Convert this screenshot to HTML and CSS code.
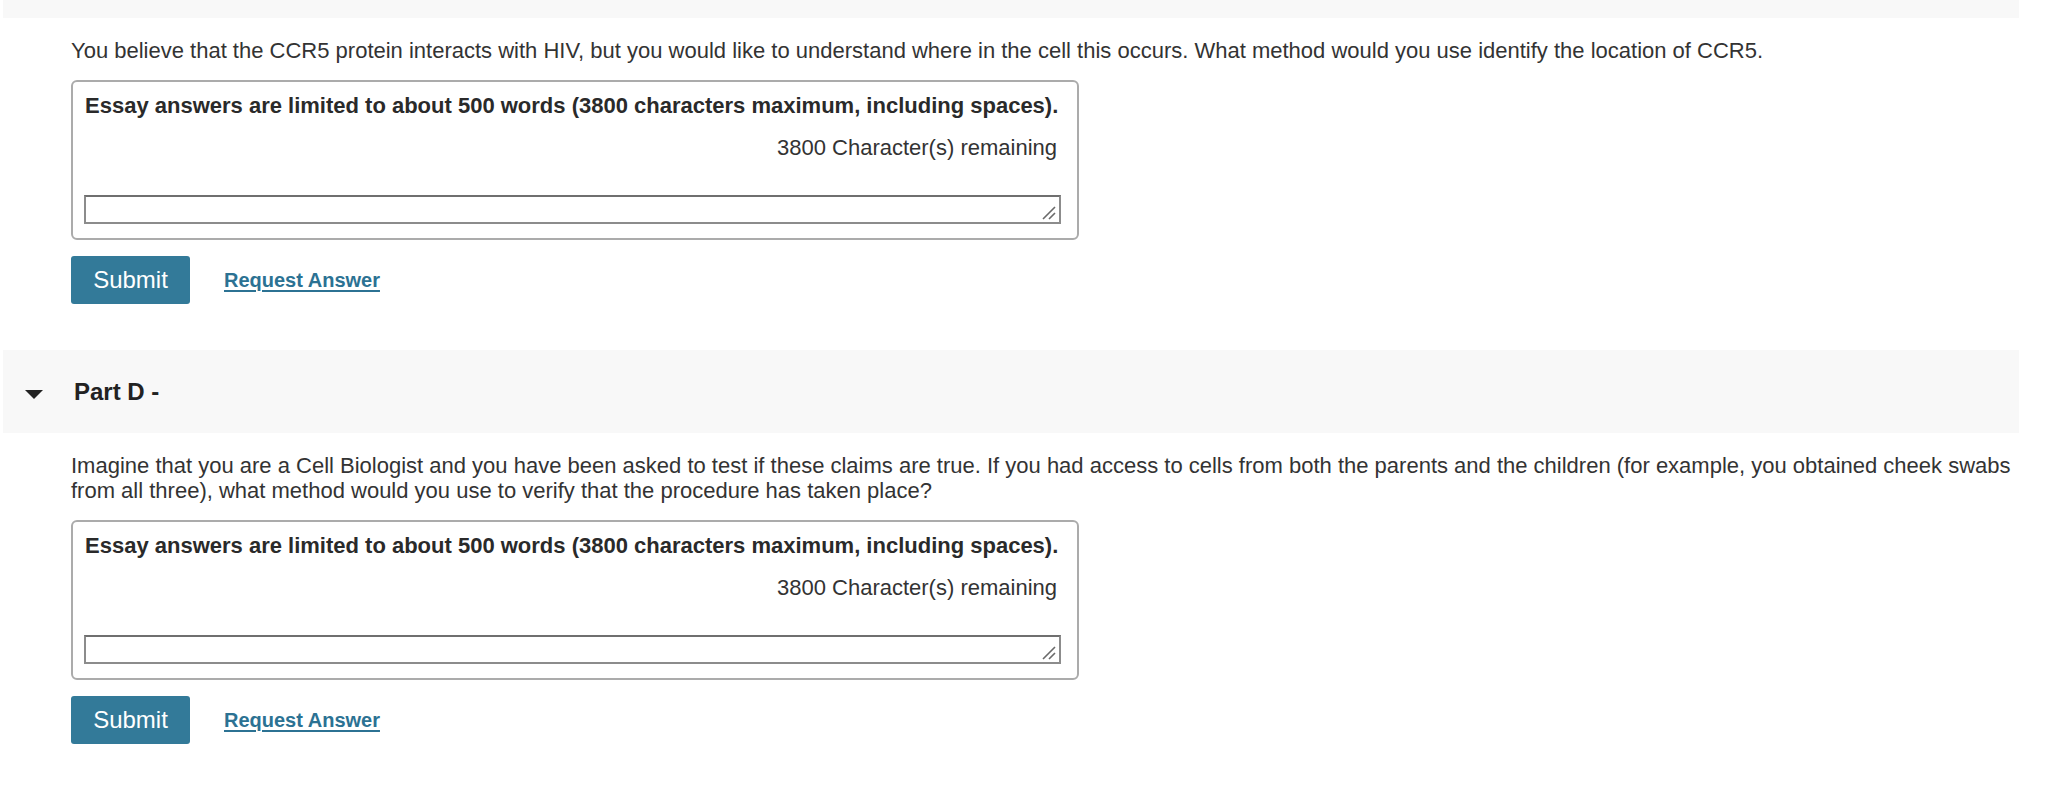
FILE: index.html
```html
<!DOCTYPE html>
<html lang="en">
<head>
<meta charset="utf-8">
<title>Parts</title>
<link rel="stylesheet" href="styles.css">
</head>
<body>
<div class="page">
  <div class="band band-top"></div>
  <section class="part-body">
    <p class="question">You believe that the CCR5 protein interacts with HIV, but you would like to understand where in the cell this occurs. What method would you use identify the location of CCR5.</p>
    <div class="essay">
      <div class="essay-note">Essay answers are limited to about 500 words (3800 characters maximum, including spaces).</div>
      <div class="remaining">3800 Character(s) remaining</div>
      <div class="answer-wrap">
        <textarea class="answer" rows="1"></textarea>
        <svg class="grip" width="14" height="14" viewBox="0 0 14 14" aria-hidden="true"><path d="M1 13 L13 1 M7 13 L13 7" stroke="#6a6a6a" stroke-width="1.6" fill="none"/></svg>
      </div>
    </div>
    <div class="actions">
      <button class="submit" type="button">Submit</button>
      <a class="request" href="#">Request Answer</a>
    </div>
  </section>

  <div class="band part-header">
    <span class="caret"></span>
    <h3 class="part-title">Part D -</h3>
  </div>
  <section class="part-body">
    <p class="question">Imagine that you are a Cell Biologist and you have been asked to test if these claims are true. If you had access to cells from both the parents and the children (for example, you obtained cheek swabs from all three), what method would you use to verify that the procedure has taken place?</p>
    <div class="essay">
      <div class="essay-note">Essay answers are limited to about 500 words (3800 characters maximum, including spaces).</div>
      <div class="remaining">3800 Character(s) remaining</div>
      <div class="answer-wrap">
        <textarea class="answer" rows="1"></textarea>
        <svg class="grip" width="14" height="14" viewBox="0 0 14 14" aria-hidden="true"><path d="M1 13 L13 1 M7 13 L13 7" stroke="#6a6a6a" stroke-width="1.6" fill="none"/></svg>
      </div>
    </div>
    <div class="actions">
      <button class="submit" type="button">Submit</button>
      <a class="request" href="#">Request Answer</a>
    </div>
  </section>
</div>
</body>
</html>
```

FILE: styles.css
```css
html, body {
  margin: 0;
  padding: 0;
  background: #ffffff;
}

body {
  font-family: "Liberation Sans", Arial, Helvetica, sans-serif;
  font-size: 22px;
  line-height: 25px;
  color: #333333;
}

.page {
  margin-left: 3px;
  width: 2016px;
}

.band {
  background: #f8f8f8;
}

.band-top {
  height: 18px;
}

.part-body {
  padding: 20px 0 46px 68px;
}

.question {
  margin: 0 0 17px 0;
}

.essay {
  width: 1008px;
  box-sizing: border-box;
  border: 2px solid #ababab;
  border-radius: 6px;
  padding: 11px 16px 14px 11px;
}

.essay-note {
  font-weight: bold;
  color: #2a2a2a;
  padding-left: 1px;
}

.remaining {
  text-align: right;
  margin-top: 17px;
  padding-right: 4px;
}

.answer-wrap {
  position: relative;
  width: 977px;
  margin-top: 35px;
}

.answer {
  display: block;
  box-sizing: border-box;
  width: 977px;
  height: 29px;
  margin: 0;
  padding: 2px 4px;
  border: 2px solid #8c8c8c;
  border-top-color: #6f6f6f;
  border-radius: 0;
  font: inherit;
  resize: none;
  background: #ffffff;
}

.grip {
  position: absolute;
  right: 5px;
  bottom: 4px;
  pointer-events: none;
}

.actions {
  display: flex;
  align-items: center;
  gap: 34px;
  margin-top: 16px;
}

.submit {
  width: 119px;
  height: 48px;
  border: none;
  border-radius: 3px;
  background: #337a99;
  color: #ffffff;
  font-family: "Liberation Sans", Arial, Helvetica, sans-serif;
  font-size: 24px;
  padding: 0;
  cursor: pointer;
}

.request {
  color: #2c7293;
  font-weight: bold;
  font-size: 20px;
  text-decoration: underline;
  text-underline-offset: 3px;
}

.part-header {
  height: 83px;
  display: flex;
  align-items: center;
  padding-left: 22px;
}

.caret {
  width: 0;
  height: 0;
  border-left: 9px solid transparent;
  border-right: 9px solid transparent;
  border-top: 9px solid #222222;
  margin-top: 6px;
  margin-right: 31px;
}

.part-title {
  margin: 0;
  font-size: 24px;
  font-weight: bold;
  color: #222222;
  line-height: 25px;
}
```
